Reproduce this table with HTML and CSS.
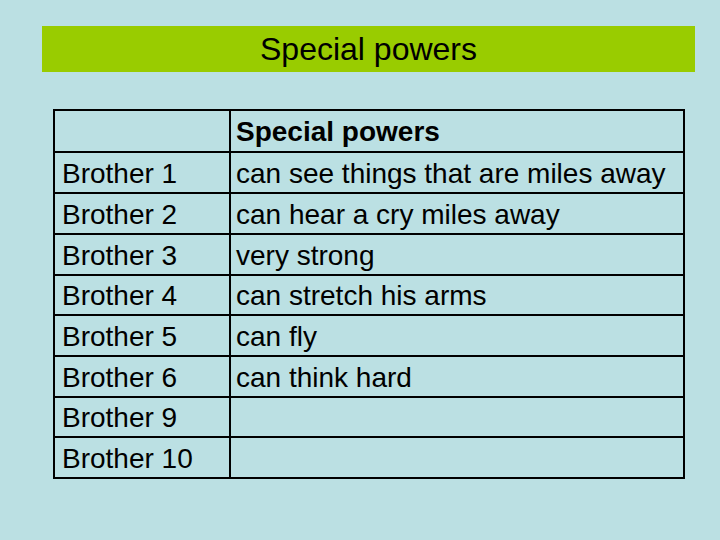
FILE: index.html
```html
<!DOCTYPE html>
<html>
<head>
<meta charset="utf-8">
<link rel="stylesheet" href="styles.css">
</head>
<body>
<div class="page">
  <div class="banner">Special powers</div>
  <table class="powers">
    <tr class="head"><td class="name"></td><td class="power">Special powers</td></tr>
    <tr><td class="name">Brother 1</td><td class="power">can see things that are miles away</td></tr>
    <tr><td class="name">Brother 2</td><td class="power">can hear a cry miles away</td></tr>
    <tr><td class="name">Brother 3</td><td class="power">very strong</td></tr>
    <tr class="short"><td class="name">Brother 4</td><td class="power">can stretch his arms</td></tr>
    <tr><td class="name">Brother 5</td><td class="power">can fly</td></tr>
    <tr><td class="name">Brother 6</td><td class="power">can think hard</td></tr>
    <tr class="short"><td class="name">Brother 9</td><td class="power"></td></tr>
    <tr><td class="name">Brother 10</td><td class="power"></td></tr>
  </table>
</div>
</body>
</html>
```
FILE: styles.css
```css
html, body {
  margin: 0;
  padding: 0;
  background: #bbe0e3;
}
.page {
  width: 720px;
  height: 540px;
  padding-top: 26px;
  box-sizing: border-box;
  font-family: "Liberation Sans", Arial, sans-serif;
  color: #000;
}
.banner {
  margin-left: 42px;
  width: 653px;
  height: 46px;
  background: #99cc00;
  font-size: 32px;
  line-height: 46px;
  text-align: center;
}
.powers {
  margin-top: 37px;
  margin-left: 53px;
  width: 632px;
  border-collapse: collapse;
  font-size: 28px;
}
.powers td {
  border: 2px solid #000;
  height: 37px;
  padding: 2px 4px 0 5px;
  line-height: 32px;
  vertical-align: middle;
  white-space: nowrap;
}
.powers tr.head td {
  height: 38px;
}
.powers tr.short td {
  height: 36px;
}
.powers td.name {
  width: 163px;
  padding-left: 7px;
}
.powers tr.head td.power {
  font-weight: bold;
}
```
